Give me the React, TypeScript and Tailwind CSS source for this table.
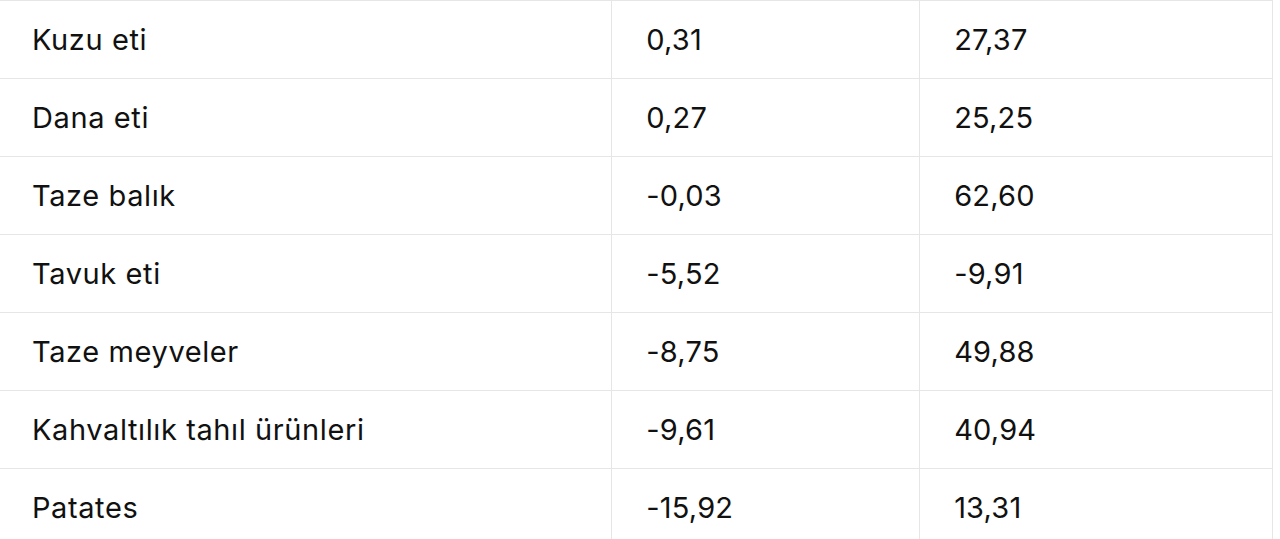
const rows: [string, string, string][] = [
  ["Kuzu eti", "0,31", "27,37"],
  ["Dana eti", "0,27", "25,25"],
  ["Taze balık", "-0,03", "62,60"],
  ["Tavuk eti", "-5,52", "-9,91"],
  ["Taze meyveler", "-8,75", "49,88"],
  ["Kahvaltılık tahıl ürünleri", "-9,61", "40,94"],
  ["Patates", "-15,92", "13,31"],
];

export default function App() {
  return (
    <div className="h-[539px] overflow-hidden bg-white">
      <table
        className="w-[1273px] border-collapse text-[29px] tracking-[0.2px] text-[#111111]"
        style={{ fontFamily: "Inter, 'Noto Sans', sans-serif" }}
      >
        <colgroup>
          <col className="w-[612px]" />
          <col className="w-[308px]" />
          <col className="w-[353px]" />
        </colgroup>
        <tbody>
          {rows.map(([name, a, b]) => (
            <tr key={name} className="h-[78px] border-t border-[#e6e6e6]">
              <td className="pl-8 align-middle tracking-[0.6px]">{name}</td>
              <td className="border-l border-[#e6e6e6] pl-[34px] align-middle">{a}</td>
              <td className="border-x border-[#e6e6e6] pl-[34px] align-middle">{b}</td>
            </tr>
          ))}
        </tbody>
      </table>
    </div>
  );
}
